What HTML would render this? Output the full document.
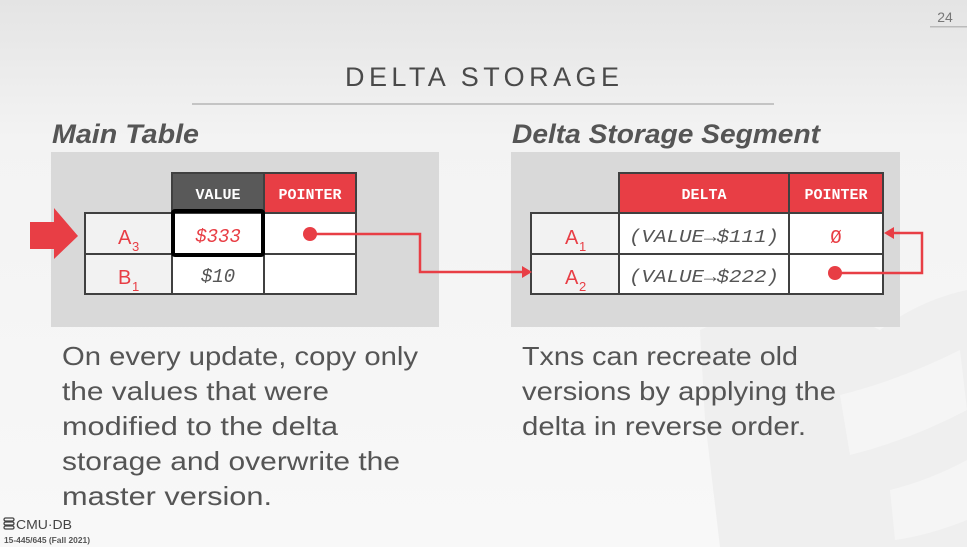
<!DOCTYPE html>
<html><head><meta charset="utf-8"><style>
html,body{margin:0;padding:0;width:967px;height:547px;overflow:hidden}
svg{display:block}
</style></head><body>
<svg width="967" height="547" viewBox="0 0 967 547" xmlns="http://www.w3.org/2000/svg">
<defs>
<linearGradient id="bg" x1="0" y1="0" x2="0" y2="1">
<stop offset="0" stop-color="#e4e4e4"/><stop offset="0.25" stop-color="#f3f3f3"/><stop offset="1" stop-color="#f8f8f8"/>
</linearGradient>
</defs>
<rect width="967" height="547" fill="url(#bg)"/>
<!-- watermark -->
<g fill="#efefef">
<path d="M700 330 Q720 320 760 315 L790 310 Q830 305 860 320 L880 330 L880 547 L720 547 L705 420 Z"/>
<path d="M880 330 Q920 300 967 290 L967 547 L880 547 Z"/>
</g>
<g fill="#f5f5f5">
<path d="M840 395 Q900 380 960 350 L967 410 Q910 440 850 455 Z"/>
<path d="M890 490 Q930 480 967 460 L967 520 Q930 535 895 540 Z"/>
</g>
<!-- page number -->
<text x="945" y="22" font-family="Liberation Sans, sans-serif" font-size="14" fill="#777" text-anchor="middle">24</text>
<rect x="930" y="26" width="37" height="1.5" fill="#bbb"/>
<!-- title -->
<text x="345" y="86" font-family="Liberation Sans, sans-serif" font-size="27" fill="#4a4a4a" textLength="274" lengthAdjust="spacing">DELTA STORAGE</text>
<rect x="192" y="103" width="582" height="2" fill="#c4c4c4"/>
<!-- headings -->
<text x="52" y="143" font-family="Liberation Sans, sans-serif" font-size="27" font-weight="bold" font-style="italic" fill="#555" textLength="147" lengthAdjust="spacingAndGlyphs">Main Table</text>
<text x="512" y="143" font-family="Liberation Sans, sans-serif" font-size="27" font-weight="bold" font-style="italic" fill="#555" textLength="308" lengthAdjust="spacingAndGlyphs">Delta Storage Segment</text>
<!-- left box -->
<rect x="51" y="152" width="388" height="175" fill="#d9d9d9"/>
<rect x="172" y="173" width="92" height="40" fill="#595959"/>
<rect x="264" y="173" width="92" height="40" fill="#e83e45"/>
<rect x="85" y="213" width="87" height="81" fill="#f2f2f2"/>
<rect x="172" y="213" width="184" height="81" fill="#fff"/>
<g stroke="#404040" stroke-width="2" fill="none">
<rect x="172" y="173" width="184" height="40"/>
<line x1="264" y1="173" x2="264" y2="294"/>
<rect x="85" y="213" width="271" height="81"/>
<line x1="85" y1="254" x2="356" y2="254"/>
<line x1="172" y1="213" x2="172" y2="294"/>
</g>
<rect x="173" y="211" width="90" height="44" fill="none" stroke="#000" stroke-width="4" rx="2"/>
<g font-family="Liberation Mono, monospace" font-size="15" text-anchor="middle">
<text x="218" y="199" fill="#fff" font-weight="bold">VALUE</text>
<text x="310" y="199" fill="#fff" font-weight="bold">POINTER</text>
<text x="218" y="242" fill="#e83e45" font-style="italic" font-size="19">$333</text>
<text x="218" y="282" fill="#555" font-style="italic" font-size="19">$10</text>
</g>
<g font-family="Liberation Sans, sans-serif" fill="#e83e45" font-size="20">
<text x="118" y="244">A</text><text x="132" y="251" font-size="13">3</text>
<text x="118" y="284">B</text><text x="132" y="291" font-size="13">1</text>
</g>
<path d="M30 222 H54 V208 L78 236 L54 259 V249 H30 Z" fill="#e83e45"/>
<!-- right box -->
<rect x="511" y="152" width="389" height="175" fill="#d9d9d9"/>
<rect x="619" y="173" width="264" height="40" fill="#e83e45"/>
<rect x="531" y="213" width="88" height="81" fill="#f2f2f2"/>
<rect x="619" y="213" width="264" height="81" fill="#fff"/>
<g stroke="#404040" stroke-width="2" fill="none">
<rect x="619" y="173" width="264" height="40"/>
<line x1="789" y1="173" x2="789" y2="294"/>
<rect x="531" y="213" width="352" height="81"/>
<line x1="531" y1="254" x2="883" y2="254"/>
<line x1="619" y1="213" x2="619" y2="294"/>
</g>
<g font-family="Liberation Mono, monospace" font-size="15" text-anchor="middle">
<text x="704" y="199" fill="#fff" font-weight="bold">DELTA</text>
<text x="836" y="199" fill="#fff" font-weight="bold">POINTER</text>
<text x="704" y="242" fill="#555" font-style="italic" font-size="18" textLength="150" lengthAdjust="spacingAndGlyphs">(VALUE→$111)</text>
<text x="704" y="282" fill="#555" font-style="italic" font-size="18" textLength="150" lengthAdjust="spacingAndGlyphs">(VALUE→$222)</text>
<text x="836" y="243" fill="#e83e45" font-size="19">Ø</text>
</g>
<g font-family="Liberation Sans, sans-serif" fill="#e83e45" font-size="20">
<text x="565" y="244">A</text><text x="579" y="251" font-size="13">1</text>
<text x="565" y="284">A</text><text x="579" y="291" font-size="13">2</text>
</g>
<!-- pointer lines (on top) -->
<circle cx="310" cy="234" r="7" fill="#e83e45"/>
<polyline points="310,234 420,234 420,272 524,272" fill="none" stroke="#e83e45" stroke-width="2.5"/>
<path d="M532 272 L522 266 L522 278 Z" fill="#e83e45"/>
<circle cx="835" cy="273" r="7" fill="#e83e45"/>
<polyline points="835,273 922,273 922,233 893,233" fill="none" stroke="#e83e45" stroke-width="2.5"/>
<path d="M884 233 L894 227 L894 239 Z" fill="#e83e45"/>
<!-- body text -->
<g font-family="Liberation Sans, sans-serif" font-size="26" fill="#555">
<text x="62" y="365" textLength="356" lengthAdjust="spacingAndGlyphs">On every update, copy only</text>
<text x="62" y="400" textLength="267" lengthAdjust="spacingAndGlyphs">the values that were</text>
<text x="62" y="435" textLength="276" lengthAdjust="spacingAndGlyphs">modified to the delta</text>
<text x="62" y="470" textLength="338" lengthAdjust="spacingAndGlyphs">storage and overwrite the</text>
<text x="62" y="505" textLength="210" lengthAdjust="spacingAndGlyphs">master version.</text>
<text x="522" y="365" textLength="276" lengthAdjust="spacingAndGlyphs">Txns can recreate old</text>
<text x="522" y="400" textLength="314" lengthAdjust="spacingAndGlyphs">versions by applying the</text>
<text x="522" y="435" textLength="284" lengthAdjust="spacingAndGlyphs">delta in reverse order.</text>
</g>
<!-- footer -->
<g fill="none" stroke="#444" stroke-width="1.3">
<rect x="4" y="518" width="10" height="3" rx="1.5"/>
<rect x="4" y="522" width="10" height="3" rx="1.5"/>
<rect x="4" y="526" width="10" height="3" rx="1.5"/>
</g>
<text x="16" y="529" font-family="Liberation Sans, sans-serif" font-size="13" fill="#444" textLength="56" lengthAdjust="spacingAndGlyphs">CMU·DB</text>
<text x="4" y="543" font-family="Liberation Sans, sans-serif" font-size="8" font-weight="bold" fill="#555" textLength="86" lengthAdjust="spacingAndGlyphs">15-445/645 (Fall 2021)</text>
</svg>
</body></html>
